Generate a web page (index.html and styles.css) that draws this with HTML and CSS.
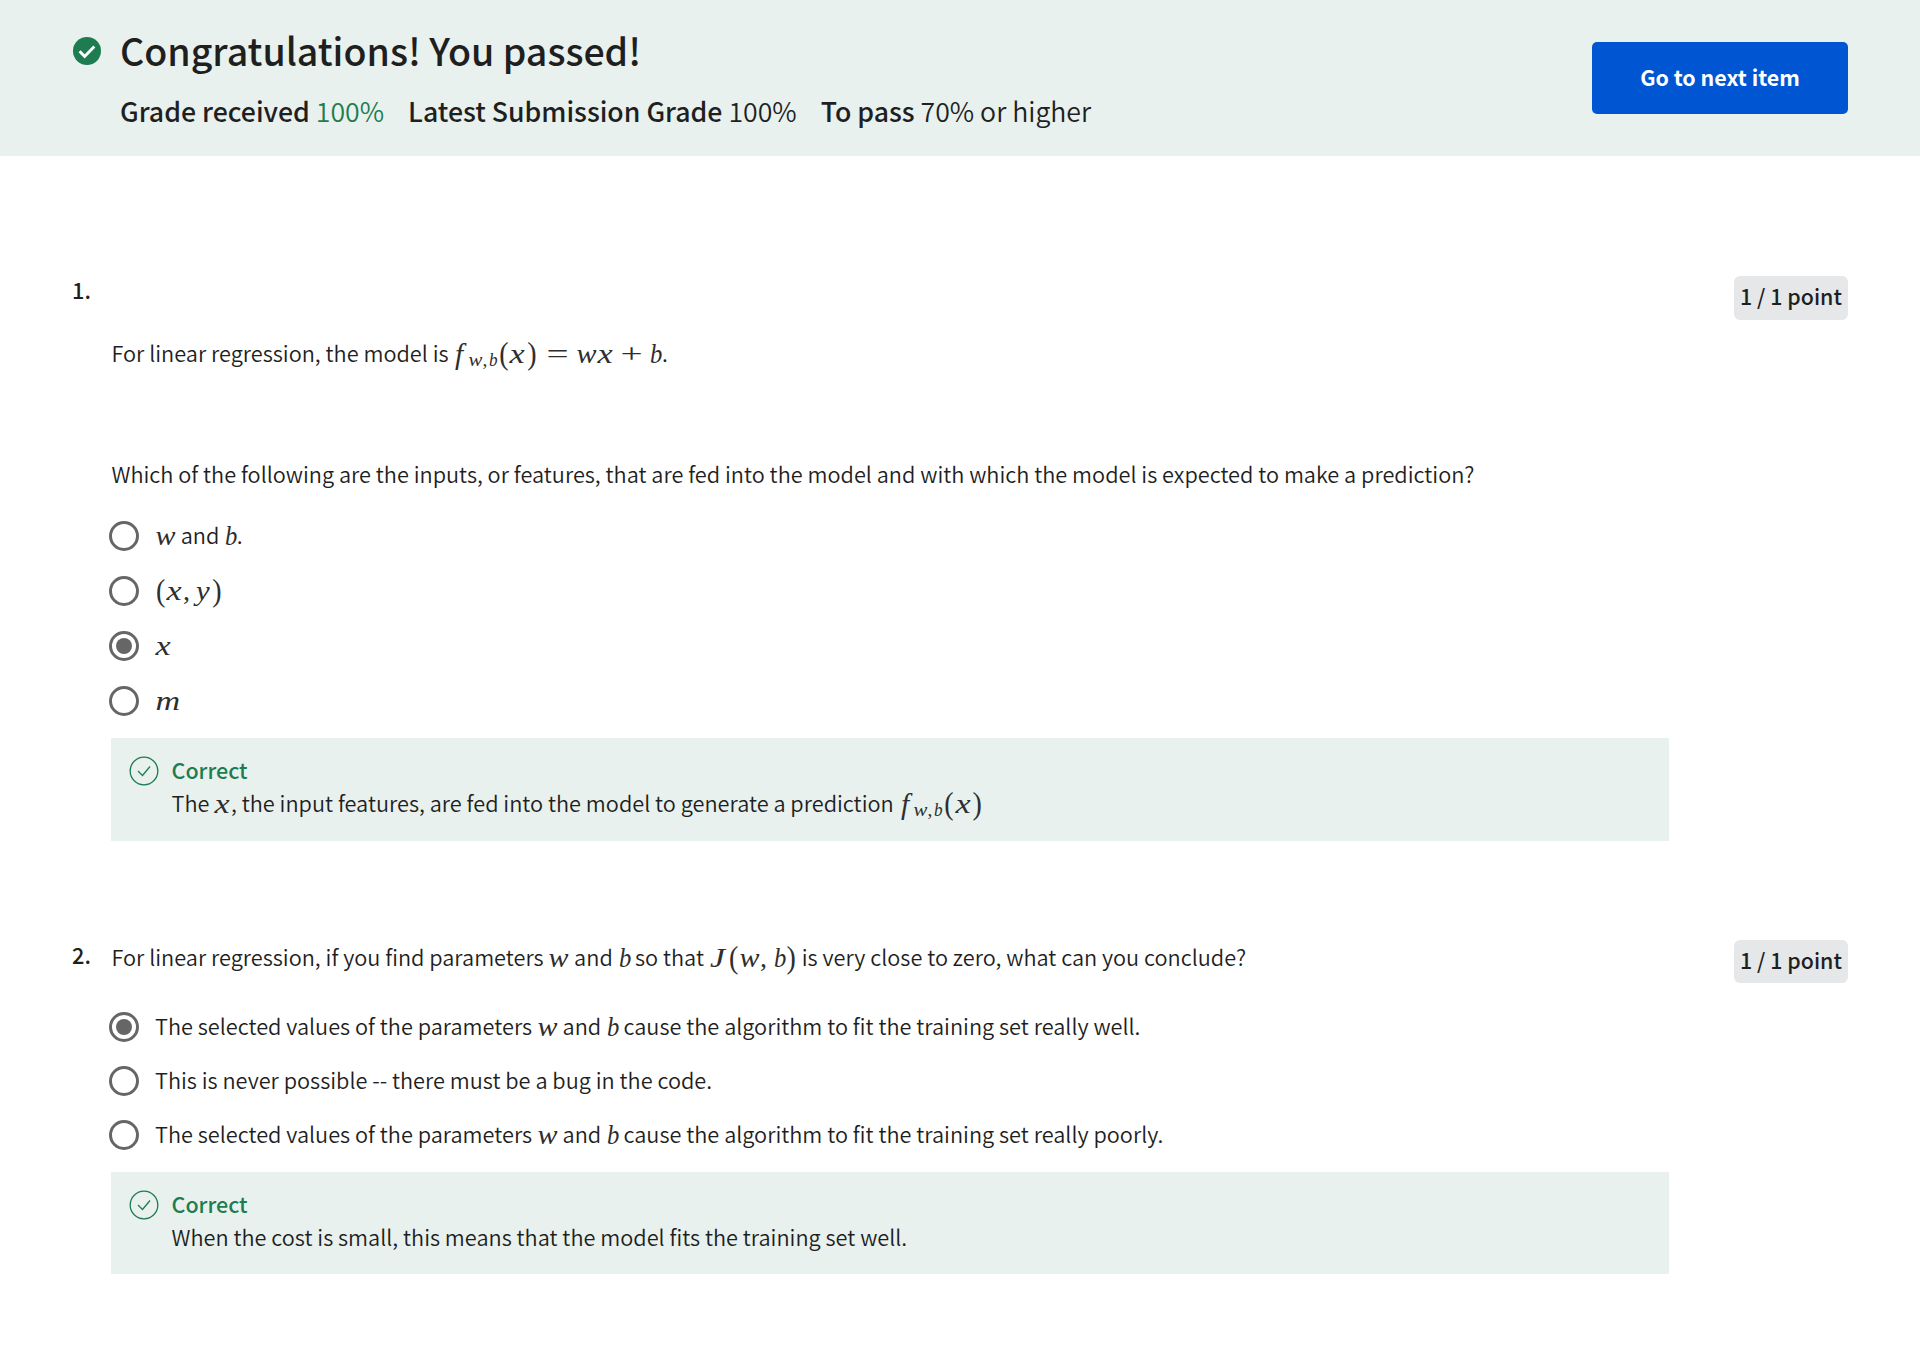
FILE: index.html
```html
<!DOCTYPE html>
<html lang="en">
<head>
<meta charset="utf-8">
<title>Quiz results</title>
<link rel="stylesheet" href="styles.css">
</head>
<body>
<header class="banner">
  <svg class="banner-icon" viewBox="0 0 27 27"><circle cx="13.5" cy="13.5" r="13.5" fill="#1d7c50"/><path d="M6.3 13.8l4.9 4.9 9.4-9.6" fill="none" stroke="#fff" stroke-width="2.8"/></svg>
  <div class="banner-text">
    <h1 class="title">Congratulations! You passed!</h1>
    <p class="grades"><span><b>Grade received</b> <span class="green">100%</span></span><span><b>Latest Submission Grade</b> 100%</span><span><b>To pass</b> 70% or higher</span></p>
  </div>
  <button class="next">Go to next item</button>
</header>
<main class="quiz">
  <section class="question first">
    <div class="number">1.</div>
    <div class="content">
      <div class="prompt">
        <p class="line">For linear regression, the model is <span class="math"><i class="f">f</i><span class="sub"><i class="w">w</i><i class="c">,</i><i class="b">b</i></span><i class="p">(</i><i class="x">x</i><i class="p">)</i><i class="rel">=</i><i class="w">w</i><i class="x">x</i><i class="op">+</i><i class="b">b</i></span>.</p>
        <p class="line">Which of the following are the inputs, or features, that are fed into the model and with which the model is expected to make a prediction?</p>
      </div>
      <div class="options">
        <label class="option"><span class="radio"></span><span class="label"><i class="w">w</i> and <i class="b">b</i>.</span></label>
        <label class="option"><span class="radio"></span><span class="label"><i class="p">(</i><i class="x">x</i><i class="c">,</i><i class="y">y</i><i class="p">)</i></span></label>
        <label class="option"><span class="radio on"></span><span class="label"><i class="x">x</i></span></label>
        <label class="option"><span class="radio"></span><span class="label"><i class="mm">m</i></span></label>
      </div>
      <div class="feedback">
        <svg class="ok" viewBox="0 0 30 30"><circle cx="15" cy="15" r="13.8"/><path d="M9 15l4.5 4.5 7.5-9"/></svg>
        <div>
          <p class="correct">Correct</p>
          <p class="explain">The <i class="x">x</i>, the input features, are fed into the model to generate a prediction <span class="math"><i class="f">f</i><span class="sub"><i class="w">w</i><i class="c">,</i><i class="b">b</i></span><i class="p">(</i><i class="x">x</i><i class="p">)</i></span></p>
        </div>
      </div>
    </div>
    <div class="points">1 / 1 point</div>
  </section>
  <section class="question second">
    <div class="number">2.</div>
    <div class="content">
      <div class="prompt">
        <p class="line">For linear regression, if you find parameters <i class="w">w</i> and <i class="b">b</i> so that <span class="math"><i class="j">J</i><i class="p">(</i><i class="w">w</i><i class="c">,</i><i class="b">b</i><i class="p">)</i></span> is very close to zero, what can you conclude?</p>
      </div>
      <div class="options">
        <label class="option"><span class="radio on"></span><span class="label">The selected values of the parameters <i class="w">w</i> and <i class="b">b</i> cause the algorithm to fit the training set really well.</span></label>
        <label class="option"><span class="radio"></span><span class="label">This is never possible -- there must be a bug in the code.</span></label>
        <label class="option"><span class="radio"></span><span class="label">The selected values of the parameters <i class="w">w</i> and <i class="b">b</i> cause the algorithm to fit the training set really poorly.</span></label>
      </div>
      <div class="feedback">
        <svg class="ok" viewBox="0 0 30 30"><circle cx="15" cy="15" r="13.8"/><path d="M9 15l4.5 4.5 7.5-9"/></svg>
        <div>
          <p class="correct">Correct</p>
          <p class="explain">When the cost is small, this means that the model fits the training set well.</p>
        </div>
      </div>
    </div>
    <div class="points">1 / 1 point</div>
  </section>
</main>
</body>
</html>
```
FILE: styles.css
```css
* { box-sizing: border-box; }
body {
  margin: 0;
  color: #1f1f1f;
  background: #fff;
  font: 350 21.73px/33px "Noto Sans CJK SC", "Noto Sans", sans-serif;
}
h1, p { margin: 0; }
.banner {
  display: flex;
  align-items: flex-start;
  height: 156px;
  padding: 0 72px;
  background: #e8f1ee;
}
.banner-icon { width: 28px; height: 28px; margin: 37px 19px 0 1px; }
.banner-text { flex: 1; }
.title { margin-top: 25px; font-size: 37.5px; line-height: 50px; font-weight: 500; }
.grades { display: flex; gap: 24px; margin-top: 18px; font-size: 26.67px; line-height: 36px; }
.grades b { font-weight: 500; }
.green { color: #1d7c50; }
.next {
  width: 256px;
  height: 72px;
  margin-top: 42px;
  padding: 0 0 4px;
  border: 0;
  border-radius: 5px;
  background: #0056d2;
  color: #fff;
  font: 700 21.4px/33px "Noto Sans CJK SC", sans-serif;
}
.question {
  display: grid;
  grid-template-columns: 39px 1558px 1fr;
  padding: 0 72px;
  align-items: start;
}
.first { margin-top: 117px; }
.second { margin-top: 96px; }
.number { font-weight: 500; }
.second .number { padding-top: 1px; }
.points {
  justify-self: end;
  width: 114px;
  height: 44px;
  margin-top: 3px;
  border-radius: 6px;
  background: #e5e7e8;
  text-align: center;
  font-size: 21.4px;
  font-weight: 500;
  line-height: 39px;
}
.first .prompt { display: grid; gap: 88px; padding-top: 63px; }
.second .prompt { padding-top: 3px; }
.second .points { height: 43px; }
.line { padding-left: 0.5px; white-space: nowrap; }
.first .options { margin-top: 18.5px; }
.second .options { margin-top: 27px; }
.option { display: flex; align-items: center; height: 55px; }
.second .option { height: 54px; }
.label { margin-left: 16px; padding-bottom: 3px; white-space: nowrap; }
.first .label { padding-bottom: 4px; }
.radio {
  display: grid;
  place-items: center;
  width: 30px;
  height: 30px;
  margin-left: -2px;
  border: 3px solid #666;
  border-radius: 50%;
}
.on::after { content: ""; width: 16px; height: 16px; border-radius: 50%; background: #666; }
.feedback {
  display: flex;
  height: 103px;
  margin-top: 9.5px;
  padding: 15px 18px;
  background: #e8f1ee;
}
.second .feedback { height: 102px; margin-top: 10px; }
.ok { width: 30px; height: 30px; margin: 3px 12.5px 0 0; fill: none; stroke: #1d7c50; stroke-width: 1.3; }
.correct { color: #1d7c50; font-size: 21.5px; font-weight: 500; }
.explain { white-space: nowrap; }

/* Math symbols, spaced with the advance widths of typeset formulas */
i {
  display: inline-block;
  color: #2e2e2e;
  font: italic 28px/1 "Liberation Serif", serif;
  vertical-align: -1px;
  transform-origin: 0 50%;
}
.w { width: 20.8px; transform: translateX(.5px) scaleX(1.07); }
.x { width: 16.8px; transform: translateX(.5px) scaleX(1.22); }
.b { width: 12.6px; transform: translateX(1px) scaleX(.88); }
.y { width: 15.2px; transform: scaleX(1.1); }
.mm { width: 25.5px; transform: translateX(.5px) scaleX(1.22); }
.f { width: 14.2px; transform: translateX(2px) scale(1.05, 1.06); }
.j { width: 19.2px; transform: translateX(1px) scaleX(1.2); }
.c { width: 12.9px; font-style: normal; }
.p { width: 11.3px; font-style: normal; transform: translateX(1px) scale(1, 1.14); }
.rel, .op { width: 22.6px; margin: 0 8.1px; font-style: normal; transform: translateX(.5px) scaleX(1.4); }
.op { margin: 0 6.4px; }
.sub { display: inline-block; line-height: 1; transform: translateY(3.5px); margin-right: 1.5px; }
.sub i { font-size: 19.5px; vertical-align: baseline; }
.sub .w { width: 14.8px; }
.sub .c { width: 5.6px; }
.sub .b { width: 8.7px; }
```
